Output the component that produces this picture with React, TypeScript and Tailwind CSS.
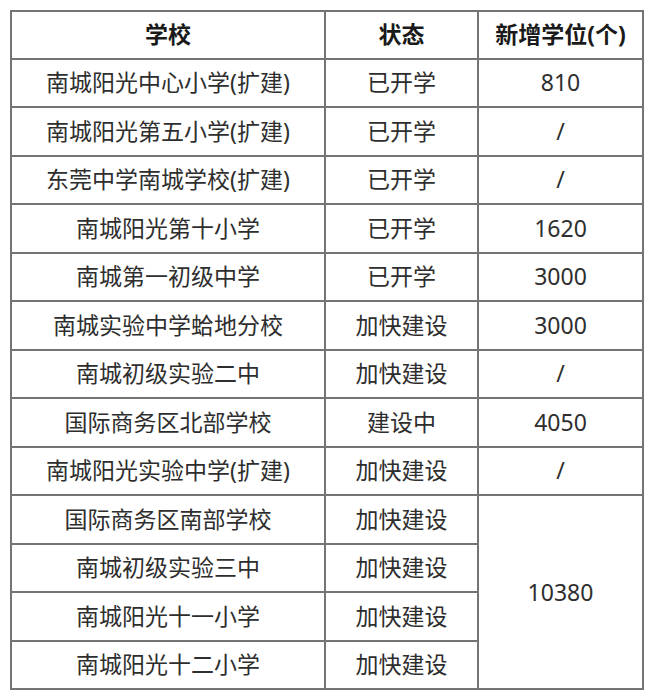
import React from "react";

type Row = { name: string; status: string; seats?: string };

const rows: Row[] = [
  { name: "南城阳光中心小学(扩建)", status: "已开学", seats: "810" },
  { name: "南城阳光第五小学(扩建)", status: "已开学", seats: "/" },
  { name: "东莞中学南城学校(扩建)", status: "已开学", seats: "/" },
  { name: "南城阳光第十小学", status: "已开学", seats: "1620" },
  { name: "南城第一初级中学", status: "已开学", seats: "3000" },
  { name: "南城实验中学蛤地分校", status: "加快建设", seats: "3000" },
  { name: "南城初级实验二中", status: "加快建设", seats: "/" },
  { name: "国际商务区北部学校", status: "建设中", seats: "4050" },
  { name: "南城阳光实验中学(扩建)", status: "加快建设", seats: "/" },
  { name: "国际商务区南部学校", status: "加快建设", seats: "10380" },
  { name: "南城初级实验三中", status: "加快建设" },
  { name: "南城阳光十一小学", status: "加快建设" },
  { name: "南城阳光十二小学", status: "加快建设" },
];

const cell = "border-2 border-[#747474] text-center align-middle p-0";

export default function App() {
  return (
    <div
      className="w-[653px] h-[693px] bg-white pl-[10px] pt-[10px] text-[#2e2e2e]"
      style={{ fontFamily: '"Noto Sans", "Noto Sans CJK SC", sans-serif' }}
    >
      <table className="border-collapse table-fixed w-[632px] text-[23px] leading-none">
        <colgroup>
          <col className="w-[314px]" />
          <col className="w-[153px]" />
          <col className="w-[165px]" />
        </colgroup>
        <thead>
          <tr className="h-[47.5px]">
            <th className={`${cell} font-bold text-[#1a1a1a]`}>学校</th>
            <th className={`${cell} font-bold text-[#1a1a1a]`}>状态</th>
            <th className={`${cell} font-bold text-[#1a1a1a]`}>新增学位(个)</th>
          </tr>
        </thead>
        <tbody>
          {rows.map((r, i) => (
            <tr key={i} className="h-[48.5px]">
              <td className={cell}>{r.name}</td>
              <td className={cell}>{r.status}</td>
              {r.seats !== undefined && (
                <td className={cell} rowSpan={i === 9 ? 4 : 1}>
                  {r.seats}
                </td>
              )}
            </tr>
          ))}
        </tbody>
      </table>
    </div>
  );
}
